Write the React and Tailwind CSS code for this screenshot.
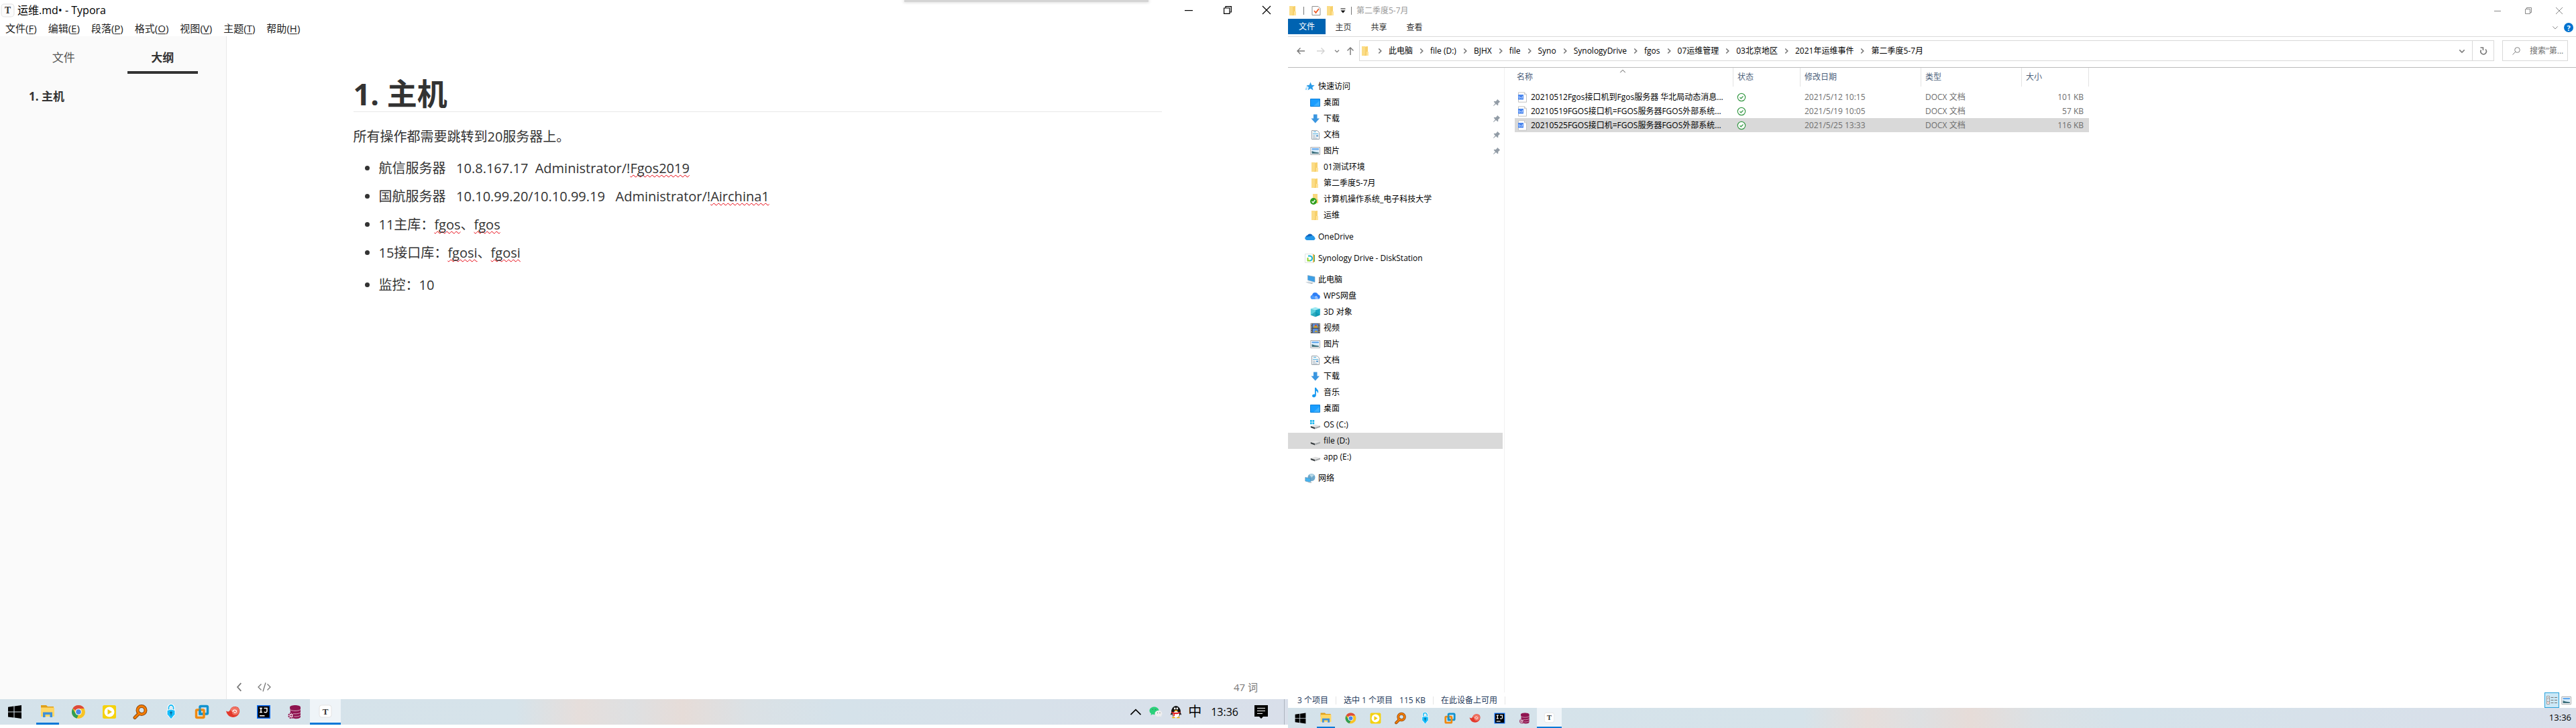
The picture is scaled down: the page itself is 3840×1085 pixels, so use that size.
import React from "react";

const UI = "font-['Open_Sans','Noto_Sans_CJK_SC',sans-serif]";

/* ---------- small drawings ---------- */

function Folder({ className = "size-4" }) {
  return (
    <svg viewBox="0 0 16 16" className={className} aria-hidden="true">
      <path d="M2 1h9v14H2z" fill="#ffe9a8" />
      <path d="M2 1h5v12l-2 2H2z" fill="#fbdc86" />
      <path d="M7 2l4-1v8h1v6H5l2-2z" fill="#f7d06b" />
      <path d="M9 9h3v6H9z" fill="#ffe39a" />
    </svg>
  );
}

function SyncedFolder() {
  return (
    <svg viewBox="0 0 16 16" className="size-4" aria-hidden="true">
      <path d="M4 0h7v8h1v6H4z" fill="#f9d87c" />
      <circle cx="5" cy="11" r="5" fill="#2f9e1f" />
      <path d="M2.6 11.2l1.8 1.8 3-4" stroke="#fff" strokeWidth="1.4" fill="none" />
    </svg>
  );
}

function Star() {
  return (
    <svg viewBox="0 0 16 16" className="size-4" aria-hidden="true">
      <path d="M8.5 1.5l1.8 4.2 4.4.3-3.4 3 1.2 4.6-4-2.5-3.9 2.5 1.2-4.5-3.3-3 4.3-.4z" fill="#2b9ce8" />
      <path d="M1 10.5h3M.8 12.5h2.6M2.5 8.5h2" stroke="#6fc2f5" strokeWidth="1" />
    </svg>
  );
}

function DesktopIcon() {
  return (
    <svg viewBox="0 0 16 16" className="size-4" aria-hidden="true">
      <path d="M.5 2.5h14v11H.5z" fill="#1a9dff" stroke="#0d7fd8" />
      <path d="M5 13L14 5v8z" fill="#3bb0ff" />
    </svg>
  );
}

function DownloadIcon() {
  return (
    <svg viewBox="0 0 16 16" className="size-4" aria-hidden="true">
      <path d="M5 1.500h5.500v6H14L7.700 14.500 1.500 7.500H5z" fill="#3a96e0" />
    </svg>
  );
}

function DocIcon() {
  return (
    <svg viewBox="0 0 16 16" className="size-4" aria-hidden="true">
      <path d="M2.500 1.500h8l3 3v10h-11z" fill="#fafafa" stroke="#9aa3aa" />
      <path d="M5 3.500h4M4 6.500h8" stroke="#4aaee0" />
      <path d="M4 9h4M4 11h4M4 13h7" stroke="#9fb4c4" />
      <path d="M9 8.500h3v2H9z" fill="#4a8fc8" />
    </svg>
  );
}

function PictureIcon({ className = "size-4" }) {
  return (
    <svg viewBox="0 0 16 16" className={className} aria-hidden="true">
      <path d="M.8 2.500h13.700v11H.8z" fill="#fff" stroke="#a7abaf" />
      <path d="M2.500 4h10.500v8H2.500z" fill="#d6ecfb" />
      <path d="M2.500 4h10.500v2.200H2.500z" fill="#62a8ee" />
      <path d="M2.500 8l4 1.500 6.500 1v1.500H2.500z" fill="#3d6f7c" />
    </svg>
  );
}

function OneDriveIcon() {
  return (
    <svg viewBox="0 0 16 16" className="size-4" aria-hidden="true">
      <path d="M1 9a4 4 0 013-3.500 4.500 4.500 0 017.500 0l.5 2.500-9 3z" fill="#0f63bd" />
      <path d="M9 7c2-2 5-1 5.500 1.500A2.500 2.500 0 0113.500 13H3a3 3 0 01-2-5z" fill="#2497e8" />
    </svg>
  );
}

function SynologyIcon() {
  return (
    <svg viewBox="0 0 16 16" className="size-4" aria-hidden="true">
      <path d="M.5 1.500h12v13H.5z" fill="#fff" stroke="#dfe3e3" />
      <path d="M5 4.500h2.500a3.500 3.500 0 010 7" fill="none" stroke="#19b8d8" strokeWidth="2" />
      <path d="M4.500 7v4.500H8" fill="none" stroke="#8ed32b" strokeWidth="2" />
      <path d="M12 2h2v12h-2z" fill="#e3b94e" />
      <path d="M14 3h1v10h-1z" fill="#3aa66a" />
    </svg>
  );
}

function ThisPcIcon() {
  return (
    <svg viewBox="0 0 16 16" className="size-4" aria-hidden="true">
      <path d="M4.500 1.500l10.500 2v8l-10.500-3z" fill="#3c9fe6" stroke="#7d9db5" strokeWidth=".6" />
      <path d="M1 11.500l5-1 5 1.800-4.500 1.500z" fill="#cfd6db" />
      <path d="M7 13l4-1 2 .8-3 1.500z" fill="#aeb7bd" />
    </svg>
  );
}

function WpsCloud() {
  return (
    <svg viewBox="0 0 16 16" className="size-4" aria-hidden="true">
      <path d="M3.500 13a3.200 3.200 0 01-.5-6.300A4.600 4.600 0 0111.800 6a3.600 3.600 0 01.4 7z" fill="#2f7ff6" />
      <path d="M5 13c0-3.500 2-5 5-5l3 5z" fill="#8fbcfb" />
      <path d="M2 7.500c3-1 5 1 6 5.500H3.500A3 3 0 011 10z" fill="#4d9bfb" />
    </svg>
  );
}

function CubeIcon() {
  return (
    <svg viewBox="0 0 16 16" className="size-4" aria-hidden="true">
      <path d="M.8 3L7.800.8 14.800 3 7.800 5.300z" fill="#9ee9f3" />
      <path d="M.8 3l7 2.300v9.900l-7-2.700z" fill="#5bcfdc" />
      <path d="M14.800 3l-7 2.300v9.900l7-2.700z" fill="#17a7c4" />
      <path d="M7.800 7.500l7 5-7 2.700-7-2.700z" fill="#0c8fa9" opacity=".6" />
    </svg>
  );
}

function VideoIcon() {
  return (
    <svg viewBox="0 0 16 16" className="size-4" aria-hidden="true">
      <path d="M.8.800h14v14.700H.8z" fill="#3b3b3b" />
      <path d="M3.800 1.500h8v6h-8zM3.800 8.800h8v6h-8z" fill="#5a8fe0" />
      <path d="M5 6l3-3 3.500 3v1.500H5zM6 14l3-3 2.800 3z" fill="#c9a430" />
      <circle cx="8.500" cy="4" r="1.300" fill="#cf4a33" />
      <path d="M2.200 1.500v14M13.400 1.500v14" stroke="#e8e8e8" strokeWidth="1.500" strokeDasharray="1.400 1.400" />
    </svg>
  );
}

function MusicIcon() {
  return (
    <svg viewBox="0 0 16 16" className="size-4" aria-hidden="true">
      <path d="M7 .8h2c.3 2.500 3.500 3 3.200 6.200-.2 1.300-.7 1.800-1 2.200.2-2.200-1-3.200-2.400-3.700V12c0 4-5.800 4-5.800 1 0-2.200 2.300-3 4-2.400z" fill="#189af0" />
    </svg>
  );
}

function DriveIcon({ windows }) {
  return (
    <svg viewBox="0 0 16 16" className="size-4" aria-hidden="true">
      {windows && <path d="M0 1h2.700v2.700H0zM3.500 1h2.700v2.700H3.500zM0 4.500h2.700v2.700H0zM3.500 4.500h2.700v2.700H3.500z" fill="#17b3ec" />}
      <path d="M.8 10L8 7.800l7 1.600-8 2.600z" fill="#e3e3e3" />
      <path d="M.8 10l6.200 2v2.600L.8 12.300z" fill="#3a3f42" />
      <path d="M7 12l8-2.600v2.300L7 14.600z" fill="#a8abad" />
    </svg>
  );
}

function NetworkIcon() {
  return (
    <svg viewBox="0 0 16 16" className="size-4" aria-hidden="true">
      <circle cx="10" cy="6.500" r="5.500" fill="#6fa9cc" />
      <path d="M7 3c2-2 5-2 7 1-2 0-3 1-3 3z" fill="#b8d9e8" />
      <path d="M.8 6.500l8 1.500v6l-8-2z" fill="#45b3ef" stroke="#5f88a5" strokeWidth=".6" />
      <path d="M4 14l5 1 2-1-3-1z" fill="#b9c2c8" />
    </svg>
  );
}

function PinIcon() {
  return (
    <svg viewBox="0 0 12 12" className="size-3" aria-hidden="true">
      <path d="M7 .8l4.200 4-1 .5-2 2 .2 2.200-1 .8L5 7.900 1.500 11l-.5-.4 3-3.600L1.700 4.700l.8-.9 2.200.1 2-2z" fill="#929ca6" />
    </svg>
  );
}

function WordFile() {
  return (
    <svg viewBox="0 0 16 16" className="size-4 shrink-0" aria-hidden="true">
      <path d="M1.500.8h9l3 3v11.400h-12z" fill="#fff" stroke="#c3c3c3" />
      <path d="M10.500.8v3h3" fill="#eee" stroke="#c3c3c3" />
      <path d="M1 4h8v7.500H1z" fill="#4a86ee" />
      <path d="M2.500 6.200v3h1.300l1.200-1.200 1.200 1.200h1.300v-3" fill="none" stroke="#cfe0ff" strokeWidth=".9" />
    </svg>
  );
}

function StatusOk() {
  return (
    <svg viewBox="0 0 14 14" className="size-3.5" role="img" aria-label="ok">
      <circle cx="7" cy="7" r="5.700" fill="#fff" stroke="#3c9c4b" strokeWidth="1.200" />
      <path d="M4.500 7.200l1.800 1.600 3.200-3.300" fill="none" stroke="#3c9c4b" strokeWidth="1.300" />
    </svg>
  );
}

function TyporaLogo({ className }) {
  return (
    <svg viewBox="0 0 20 20" className={className} aria-hidden="true">
      <rect x="1" y="1" width="18" height="18" rx="4" fill="#fbfbfb" stroke="#e2e2e2" />
      <text x="10" y="14.500" textAnchor="middle" fontSize="13" fontFamily="Liberation Serif, serif" fontWeight="700" fill="#333">T</text>
    </svg>
  );
}

function Chevron({ d, className, width = 1.2 }) {
  return (
    <svg viewBox="0 0 12 12" className={className} fill="none" stroke="currentColor" strokeWidth={width} aria-hidden="true">
      <path d={d} />
    </svg>
  );
}

const UP = "M1.500 8.500L6 4l4.500 4.500";
const DOWN = "M1.500 4L6 8.500 10.500 4";
const RIGHT = "M4.500 3l3 3-3 3";

/* ---------- taskbar ---------- */

const apps = [
  ["开始", <path key="a" d="M2 4.800l8.500-1.200v8H2zM11.500 3.400L22 2v9.600H11.500zM2 12.600h8.500v8L2 19.400zM11.500 12.600H22V22l-10.500-1.400z" fill="#000" />],
  ["文件资源管理器", <g key="a"><path d="M2 3h8l2 2h9v5H2z" fill="#e0a01a" /><path d="M2 6.500h20V20H2z" fill="#ffd766" /><path d="M5 13.500h14V21h-3.500v-4h-7v4H5z" fill="#3f90d9" /></g>],
  ["Chrome", <g key="a"><circle cx="12" cy="12" r="10" fill="#f7c325" /><path d="M12 12L3.300 7A10 10 0 0120.700 7H12z" fill="#dd4a3c" /><path d="M3.300 7l5 8.500 3.700 1L9.500 21.700A10 10 0 013.300 7z" fill="#2f9e54" /><circle cx="12" cy="12" r="4.800" fill="#fff" /><circle cx="12" cy="12" r="3.800" fill="#4a86ea" /></g>],
  ["播放器", <g key="a"><rect x="2" y="2" width="20" height="20" rx="2.500" fill="#f5d20e" /><circle cx="12" cy="12" r="7.500" fill="#fff" /><path d="M9.500 8l6.500 4-6.500 4z" fill="#f0cb0a" /></g>],
  ["搜索工具", <g key="a" fill="none"><path d="M10.500 14L4 20.500" stroke="#8a4a12" strokeWidth="5" strokeLinecap="round" /><circle cx="14" cy="9.500" r="6" stroke="#8a4a12" strokeWidth="5" /><path d="M10.500 14L4 20.500" stroke="#f57c00" strokeWidth="3" strokeLinecap="round" /><circle cx="14" cy="9.500" r="6" stroke="#f57c00" strokeWidth="3" /></g>],
  ["VPN", <g key="a"><path d="M8.500 9V5.500a3.500 3.500 0 017 0V9" fill="none" stroke="#fff" strokeWidth="4" /><path d="M8.500 9V5.500a3.500 3.500 0 017 0V9" fill="none" stroke="#16b9f3" strokeWidth="1.800" /><path d="M6 9.500l6-1.500 6 1.500v6L12 23l-6-7.500z" fill="#16bdfb" stroke="#fff" /><circle cx="12" cy="13" r="1.700" fill="#0b6c9a" /><path d="M11.400 13h1.200v4.500h-1.200z" fill="#0b6c9a" /></g>],
  ["虚拟机", <g key="a" fill="none" strokeWidth="3.500"><rect x="9" y="3.500" width="11.500" height="11.500" rx="1.500" stroke="#1293cf" /><rect x="3.500" y="9" width="11.500" height="11.500" rx="1.500" stroke="#ef8a12" /><path d="M9 8v7h4" stroke="#1293cf" /></g>],
  ["Navicat", <g key="a"><path d="M2 10.500c3 2 5 1 6-1.500 1.500-5 8-6.500 12-3.500 3.500 3.500 2.500 9-1 12-5 4.500-15 3-17-7z" fill="#e3392c" /><path d="M8 9C10 4 17 3 20.500 7c2 3 1 7-2 9-4 1.500-8 0-7.500-4" fill="#ef7464" /><path d="M12 12c0-4 6-3.500 5.500-.5-.5 2.500-4 2.200-3.500 0" fill="none" stroke="#fff" strokeWidth="1.200" /></g>],
  ["IntelliJ IDEA", <g key="a"><rect x="2" y="2" width="20" height="20" fill="#0a6cf5" /><rect x="3.500" y="3.500" width="17" height="17" fill="#000" /><path d="M6 6.500h4M8 6.500v6M6 12.500h4M12.500 6.500h4.500v4.500c0 2-2.500 2-4.500 1.300" fill="none" stroke="#fff" strokeWidth="1.500" /><path d="M6 17h7.500v1.500H6z" fill="#fff" /></g>],
  ["数据库工具", <g key="a"><path d="M5 5c0-4 16-4 16 0v14c0 4-11 4-14 1z" fill="#8f1450" /><path d="M5 8.500c3 2.500 13 2.500 16 0M5 13c3 2.500 13 2.500 16 0M8 18c4 1.500 10 1.500 13-1" fill="none" stroke="#d6a9bf" /><circle cx="7" cy="17.500" r="3.500" fill="#fff" stroke="#8f1450" strokeWidth="2.200" strokeDasharray="2 .8" /><circle cx="7" cy="17.500" r="1.300" fill="#8f1450" /></g>],
  ["Typora", <g key="a"><rect x="3" y="3" width="18" height="18" rx="3.500" fill="#fff" stroke="#e3e3e3" /><text x="12" y="16.500" textAnchor="middle" fontSize="13" fontFamily="Liberation Serif, serif" fontWeight="700" fill="#333">T</text></g>],
];

function Taskbar({ small, children }) {
  return (
    <footer
      className={
        "flex shrink-0 items-stretch bg-[linear-gradient(90deg,#d4e2ea_0%,#d6e3ea_40%,#e6dedb_45%,#dee0e2_49%,#e6dcd8_53%,#dbe1e5_58%,#d5e2ea_65%,#d7e1ea_80%,#d9dfea_100%)] text-black " +
        (small ? "h-[30px]" : "h-[38px]")
      }
    >
      <nav aria-label="任务栏" className="flex">
        {apps.map(([name, art], i) => {
          const open = name === "Typora" || name === "文件资源管理器";
          const width = small
            ? i === 0 ? "w-[38px] pr-0.5 " : "w-[37px] "
            : i === 0 ? "w-12 pr-1 " : "w-[46px] ";
          return (
            <button
              key={name}
              aria-label={name}
              className={"flex flex-col items-center " + width + (name === "Typora" ? "bg-[#eff4f8]" : "")}
            >
              <span className="flex flex-1 items-center">
                <svg viewBox="0 0 24 24" className={small ? "size-[19px]" : "size-6"} aria-hidden="true">{art}</svg>
              </span>
              {open && (
                <span
                  className={
                    "bg-[#0078d7] " +
                    (small ? "h-0.5 " : "h-[3px] ") +
                    (name === "Typora" ? "w-full" : "w-3/4")
                  }
                />
              )}
            </button>
          );
        })}
      </nav>
      {children}
    </footer>
  );
}

/* ---------- Typora window ---------- */

const menus = [["文件", "F"], ["编辑", "E"], ["段落", "P"], ["格式", "O"], ["视图", "V"], ["主题", "T"], ["帮助", "H"]];

function Typo({ children }) {
  return (
    <span className="underline decoration-red-600 decoration-wavy decoration-1 underline-offset-2 [text-decoration-skip-ink:none]">
      {children}
    </span>
  );
}

function WindowButtons({ className, buttonClass, iconClass }) {
  return (
    <div className={"flex " + className}>
      {[["最小化", "M0 5.500h10"], ["还原", "M.5 2.500h7v7h-7zM2.500 2.500v-2h7v7h-2"], ["关闭", "M0 0l10 10M10 0L0 10"]].map(([label, d]) => (
        <button key={label} aria-label={label} className={"flex items-center justify-center " + buttonClass}>
          <svg viewBox="0 0 10 10" className={"overflow-visible " + iconClass} fill="none" stroke="currentColor" aria-hidden="true">
            <path d={d} />
          </svg>
        </button>
      ))}
    </div>
  );
}

function TyporaWindow() {
  return (
    <section className="relative flex min-w-0 flex-1 flex-col bg-white pb-[5px]">
      <div className="absolute top-0 right-[208px] h-[3px] w-[364px] bg-[#d4d4d4] shadow-[0_0_4px_1px_#dddddd]" />
      <header className="flex h-[30px] items-center justify-between">
        <div className="flex items-center gap-1 pl-px">
          <TyporaLogo className="size-[21px]" />
          <h2 className="text-base text-black">运维.md• - Typora</h2>
        </div>
        <WindowButtons className="h-7 pr-[3px] text-black" buttonClass="w-[58px]" iconClass="size-3" />
      </header>
      <nav aria-label="菜单" className="flex h-6 items-center gap-[17px] pl-2 text-[15px] text-[#222]">
        {menus.map(([t, k]) => (
          <button key={k} className="whitespace-nowrap">
            {t}(<span className="underline underline-offset-2">{k}</span>)
          </button>
        ))}
      </nav>
      <div className="flex min-h-0 flex-1">
        <aside className="w-[338px] shrink-0 border-r border-[#e8e8e8] bg-[#fafafa]">
          <div role="tablist" className="mx-[21px] flex h-14 text-[17px] text-[#555]">
            <button role="tab" aria-selected="false" className="flex-1 pt-4 pb-2">文件</button>
            <div className="flex flex-1 flex-col items-center">
              <button role="tab" aria-selected="true" className="w-[105px] flex-1 border-b-4 border-[#333] pt-4 pb-1 font-bold text-[#333]">
                大纲
              </button>
            </div>
          </div>
          <a href="#host" className="mt-5 block pl-[43px] text-[17px] leading-7 font-bold text-[#333]">1. 主机</a>
        </aside>
        <main className="flex min-w-0 flex-1 flex-col">
          <article className="mx-auto w-full max-w-[1205px] flex-1 text-xl leading-8 text-[#333]">
            <h1 id="host" className="mt-[59px] border-b border-[#e8e8e8] text-[45px] leading-[53px] font-bold">1. 主机</h1>
            <p className="mt-[21px]">所有操作都需要跳转到20服务器上。</p>
            <ul className="mt-[15px] list-disc space-y-2.5 pl-[38px] whitespace-pre">
              <li>航信服务器   10.8.167.17  Administrator/!<Typo>Fgos2019</Typo></li>
              <li>国航服务器   10.10.99.20/10.10.99.19   Administrator/!<Typo>Airchina1</Typo></li>
              <li>11主库：<Typo>fgos</Typo>、<Typo>fgos</Typo></li>
              <li>15接口库：<Typo>fgosi</Typo>、<Typo>fgosi</Typo></li>
              <li className="pt-1.5">监控：10</li>
            </ul>
          </article>
          <div className="flex h-9 items-center pr-[45px] pl-3 text-[15px] text-[#777]">
            <button aria-label="隐藏侧边栏" className="mr-5">
              <Chevron d="M8 1L3.500 6 8 11" className="size-3.5" width={1.5} />
            </button>
            <button aria-label="源代码模式">
              <svg viewBox="0 0 20 14" className="h-3.5 w-5" fill="none" stroke="currentColor" strokeWidth="1.300" aria-hidden="true">
                <path d="M5.500 2.500L1 7l4.500 4.500M14.500 2.500L19 7l-4.500 4.500M12 .5L8 13.500" />
              </svg>
            </button>
            <span className="ml-auto">47 词</span>
          </div>
        </main>
      </div>
      <Taskbar>
        <div className="ml-auto flex items-center pr-[5px]">
          <button aria-label="显示隐藏的图标">
            <Chevron d={UP} className="size-5" width={1} />
          </button>
          <button aria-label="微信" className="ml-2.5">
            <svg viewBox="0 0 20 20" className="size-5" aria-hidden="true">
              <path d="M7.500 2.500c4 0 7 2.500 7 5.700s-3 5.800-7 5.800c-1 0-1.800-.1-2.500-.4L2.500 15l.5-2.500C1.500 11.500.5 10 .5 8.200c0-3.200 3-5.700 7-5.700z" fill="#2bd07a" />
              <path d="M14 8c3 0 5.500 2 5.500 4.600 0 1.300-.6 2.400-1.600 3.200l.4 1.700-1.900-.9c-.7.300-1.500.4-2.400.4-3 0-5.500-2-5.500-4.500S11 8 14 8z" fill="#eee" />
              <path d="M4.500 6.500h1M9 6.500h1M12 11.500h1M15.500 11.500h1" stroke="#555" strokeWidth="1.200" />
            </svg>
          </button>
          <button aria-label="QQ" className="ml-2.5">
            <svg viewBox="0 0 20 20" className="size-5" aria-hidden="true">
              <ellipse cx="10" cy="10" rx="7" ry="9" fill="#111" />
              <path d="M3.500 10l-1.800 4.500 2.300-1zM16.500 10l1.800 4.500-2.300-1z" fill="#111" />
              <ellipse cx="10" cy="14" rx="5" ry="5" fill="#fff" />
              <path d="M3.500 9.500c4 2 9 2 13 0v2c-3 1.800-6 2-8.500 1.700v3H6v-3.500l-2.500-1z" fill="#e32222" />
              <circle cx="8.200" cy="5" r="1.400" fill="#fff" />
              <circle cx="11.800" cy="5" r="1.400" fill="#fff" />
              <path d="M7 8c2-1 4-1 6 0-1.500 1.500-4.500 1.500-6 0z" fill="#f7b500" />
              <path d="M4 18.500c1-1.200 4-1.200 5 0 0 1-5 1.300-5 0zM11 18.500c1-1.200 4-1.200 5 0 0 1-5 1.300-5 0z" fill="#f7b500" />
            </svg>
          </button>
          <button className="ml-2 text-xl leading-8">中</button>
          <time className="ml-3.5 text-base">13:36</time>
          <button aria-label="通知" className="ml-6">
            <svg viewBox="0 0 20 20" className="size-5" aria-hidden="true">
              <path d="M0 0h20v17h-7l-3 3-3-3H0z" fill="#000" />
              <path d="M4 4.500h12M4 8.500h12M4 12.500h8" stroke="#fff" strokeWidth="1.200" />
            </svg>
          </button>
          <span className="ml-6 h-full w-px bg-[#adb4bf]" />
        </div>
      </Taskbar>
    </section>
  );
}

/* ---------- Explorer window ---------- */

const crumbs = ["此电脑", "file (D:)", "BJHX", "file", "Syno", "SynologyDrive", "fgos", "07运维管理", "03北京地区", "2021年运维事件", "第二季度5-7月"];

const tree = [
  {
    label: "快速访问", icon: <Star />, children: [
      { label: "桌面", icon: <DesktopIcon />, pin: true },
      { label: "下载", icon: <DownloadIcon />, pin: true },
      { label: "文档", icon: <DocIcon />, pin: true },
      { label: "图片", icon: <PictureIcon />, pin: true },
      { label: "01测试环境", icon: <Folder /> },
      { label: "第二季度5-7月", icon: <Folder /> },
      { label: "计算机操作系统_电子科技大学", icon: <SyncedFolder /> },
      { label: "运维", icon: <Folder /> },
    ],
  },
  { label: "OneDrive", icon: <OneDriveIcon />, children: [] },
  { label: "Synology Drive - DiskStation", icon: <SynologyIcon />, children: [] },
  {
    label: "此电脑", icon: <ThisPcIcon />, children: [
      { label: "WPS网盘", icon: <WpsCloud /> },
      { label: "3D 对象", icon: <CubeIcon /> },
      { label: "视频", icon: <VideoIcon /> },
      { label: "图片", icon: <PictureIcon /> },
      { label: "文档", icon: <DocIcon /> },
      { label: "下载", icon: <DownloadIcon /> },
      { label: "音乐", icon: <MusicIcon /> },
      { label: "桌面", icon: <DesktopIcon /> },
      { label: "OS (C:)", icon: <DriveIcon windows /> },
      { label: "file (D:)", icon: <DriveIcon />, selected: true },
      { label: "app (E:)", icon: <DriveIcon /> },
    ],
  },
  { label: "网络", icon: <NetworkIcon />, children: [] },
];

const files = [
  ["20210512Fgos接口机到Fgos服务器 华北局动态消息...", "2021/5/12 10:15", "101 KB"],
  ["20210519FGOS接口机=FGOS服务器FGOS外部系统...", "2021/5/19 10:05", "57 KB"],
  ["20210525FGOS接口机=FGOS服务器FGOS外部系统...", "2021/5/25 13:33", "116 KB"],
];

const headings = [["名称", "w-[326px]", "pl-[3px]"], ["状态", "w-[100px]", "pl-1.5"], ["修改日期", "w-[180px]", "pl-1.5"], ["类型", "w-[150px]", "pl-1.5"], ["大小", "w-[100px]", "pl-1.5"]];

function TreeRow({ item, child }) {
  return (
    <button
      className={
        "flex h-6 w-80 items-center gap-1 pr-[3px] whitespace-nowrap " +
        (child ? "pl-[33px] " : "pl-[25px] ") +
        (item.selected ? "bg-[#d9d9d9]" : "")
      }
    >
      {item.icon}
      <span>{item.label}</span>
      {item.pin && <span className="ml-auto"><PinIcon /></span>}
    </button>
  );
}

function ExplorerWindow() {
  return (
    <section className="flex min-w-0 flex-1 flex-col overflow-hidden bg-white text-xs text-black">
      <header className="flex h-7 items-center justify-between pt-1">
        <div className="flex items-center text-[#999]">
          <Folder />
          <span className="mx-[7px] h-3 w-px bg-[#777]" />
          <button aria-label="属性" className="ml-1">
            <svg viewBox="0 0 14 16" className="h-4 w-3.5" aria-hidden="true">
              <path d="M1 1.500h9l3 3v10H1z" fill="#fff" stroke="#8f8f8f" />
              <path d="M4 8l2.500 3L11 5" fill="none" stroke="#ee5a24" strokeWidth="1.800" />
            </svg>
          </button>
          <button aria-label="新建文件夹" className="ml-[7px]"><Folder /></button>
          <button aria-label="自定义快速访问工具栏" className="ml-1.5">
            <svg viewBox="0 0 8 8" className="size-2" aria-hidden="true">
              <path d="M.5.500h7v1h-7zM.5 3.500h7L4 7.500z" fill="#111" />
            </svg>
          </button>
          <span className="mr-[7px] ml-2 h-3 w-px bg-[#777]" />
          <h2>第二季度5-7月</h2>
        </div>
        <WindowButtons className="h-5 pr-0.5 text-[#888]" buttonClass="w-[46px]" iconClass="size-2.5" />
      </header>
      <div className="flex h-[27px] items-start border-b border-[#dadada] text-[#333]">
        <button className="h-[23px] w-14 bg-[#0063b1] text-white">文件</button>
        <button className="h-[25px] w-[53px]">主页</button>
        <button className="h-[25px] w-[53px]">共享</button>
        <button className="h-[25px] w-[53px]">查看</button>
        <div className="mt-1.5 ml-auto flex items-center gap-2 pr-1">
          <button aria-label="展开功能区" className="text-[#888]"><Chevron d={DOWN} className="size-2.5" /></button>
          <button aria-label="帮助" className="flex size-3.5 items-center justify-center rounded-full bg-[#0072cf] text-[11px] leading-none font-bold text-white">?</button>
        </div>
      </div>
      <div className="flex h-[46px] items-center border-b border-[#bbb] pr-3 pb-1 pl-[13px] text-[#808080]">
        <button aria-label="后退">
          <svg viewBox="0 0 12 12" className="size-3" fill="none" stroke="#777" strokeWidth="1.400" aria-hidden="true"><path d="M12 6H1M5.500 1.500L1 6l4.500 4.500" /></svg>
        </button>
        <button aria-label="前进" className="ml-[18px]">
          <svg viewBox="0 0 12 12" className="size-3" fill="none" stroke="#d2d2d2" strokeWidth="1.400" aria-hidden="true"><path d="M0 6h11M6.500 1.500L11 6l-4.500 4.500" /></svg>
        </button>
        <button aria-label="最近位置" className="ml-3.5"><Chevron d={DOWN} className="size-2" width={2} /></button>
        <button aria-label="上移" className="ml-2.5">
          <svg viewBox="0 0 12 12" className="size-3" fill="none" stroke="#777" strokeWidth="1.400" aria-hidden="true"><path d="M6 12V1M1.500 5.500L6 1l4.500 4.500" /></svg>
        </button>
        <div className="ml-[7px] flex h-[31px] flex-1 items-stretch border border-[#d9d9d9]">
          <nav aria-label="地址" className="flex items-center pl-px">
            <Folder />
            {crumbs.map((c, i) => (
              <span key={i} className="flex items-center whitespace-nowrap">
                <Chevron d={RIGHT} className="mx-1.5 size-3.5 text-[#777]" width={1.4} />
                <a href="#folder" className="text-black">{c}</a>
              </span>
            ))}
          </nav>
          <button aria-label="历史记录" className="ml-auto flex w-[30px] items-center justify-center"><Chevron d={DOWN} className="size-2.5" width={2} /></button>
          <button aria-label="刷新" className="flex w-8 items-center justify-center border-l border-[#d9d9d9]">
            <svg viewBox="0 0 12 12" className="size-3" fill="none" stroke="#777" strokeWidth="1.600" aria-hidden="true">
              <path d="M9 3.500A4.200 4.200 0 112.500 4.500M1.500 1h4v4" />
            </svg>
          </button>
        </div>
        <label className="ml-3 flex h-[31px] w-[98px] items-center gap-3.5 border border-[#d9d9d9] pl-3.5">
          <svg viewBox="0 0 12 12" className="size-3 shrink-0" fill="none" stroke="#808080" aria-hidden="true">
            <circle cx="7.500" cy="4.500" r="3.800" /><path d="M4.800 7.200L.5 11.500" />
          </svg>
          <input aria-label="搜索" placeholder={'搜索"第...'} className="w-full min-w-0 outline-none placeholder:text-[#6d6d6d]" />
        </label>
      </div>
      <div className="flex min-h-0 flex-1">
        <nav aria-label="导航窗格" className="flex w-[323px] shrink-0 flex-col gap-2 border-r border-[#f0f0f0] pt-4">
          {tree.map((g) => (
            <div key={g.label}>
              <TreeRow item={g} />
              {g.children.map((c) => <TreeRow key={c.label} item={c} child />)}
            </div>
          ))}
        </nav>
        <main className="relative min-w-0 flex-1 pl-[15px]">
          <span className="absolute top-0 left-[171px] text-[#555]"><Chevron d={UP} className="size-2.5" width={1.2} /></span>
          <table className="table-fixed border-collapse text-left text-[#6d6d6d]">
            <thead>
              <tr>
                {headings.map(([h, w, p]) => (
                  <th key={h} scope="col" className={"h-[33px] p-0 align-top font-normal text-[#4c607a] " + w}>
                    <div className={"h-7 border-r border-[#e3e3e3] leading-7 " + p}>{h}</div>
                  </th>
                ))}
              </tr>
            </thead>
            <tbody>
              {files.map(([name, date, size], i) => (
                <tr key={name} className={"h-[21px] " + (i === 2 ? "bg-[#d9d9d9]" : "")}>
                  <td className="p-0 text-black">
                    <div className="flex items-center gap-1 overflow-hidden pl-1 whitespace-nowrap"><WordFile /><span>{name}</span></div>
                  </td>
                  <td className="p-0 pl-[5px]"><StatusOk /></td>
                  <td className="p-0 pl-1.5">{date}</td>
                  <td className="p-0 pl-1.5">DOCX 文档</td>
                  <td className="p-0 pr-2 text-right">{size}</td>
                </tr>
              ))}
            </tbody>
          </table>
        </main>
      </div>
      <div className="flex h-[23px] shrink-0 items-center pr-1.5 pl-3.5 text-[#1e395b]">
        <span>3 个项目</span>
        <span className="mx-[11px] h-3 w-px bg-[#e5e5e5]" />
        <span>选中 1 个项目</span>
        <span className="ml-2.5">115 KB</span>
        <span className="mx-[11px] h-3 w-px bg-[#e5e5e5]" />
        <span>在此设备上可用</span>
        <span className="mx-[11px] h-3 w-px bg-[#e5e5e5]" />
        <button aria-label="详细信息" className="ml-auto flex h-full w-[22px] items-center justify-center border border-[#26a0da] bg-[#cce8f6]">
          <svg viewBox="0 0 16 14" className="h-3.5 w-4" fill="none" aria-hidden="true">
            <path d="M.5.500h4v12h-4zM.5 4.500h4M.5 8.500h4" fill="#fff" stroke="#999" />
            <path d="M6.500 2.500h4M12 2.500h4M6.500 6.500h4M12 6.500h4M6.500 10.500h4M12 10.500h4" stroke="#777" />
            <path d="M2 2h1v1H2z" fill="#444" /><path d="M2 6h1v1H2z" fill="#3a8fe0" /><path d="M2 10h1v1H2z" fill="#d22" />
          </svg>
        </button>
        <button aria-label="大缩略图" className="ml-[3px]"><PictureIcon /></button>
      </div>
      <Taskbar small>
        <time className="ml-auto self-center pr-[7px] text-[13px]">13:36</time>
      </Taskbar>
    </section>
  );
}

export default function App() {
  return (
    <div className={"flex h-screen overflow-hidden " + UI}>
      <TyporaWindow />
      <ExplorerWindow />
    </div>
  );
}
